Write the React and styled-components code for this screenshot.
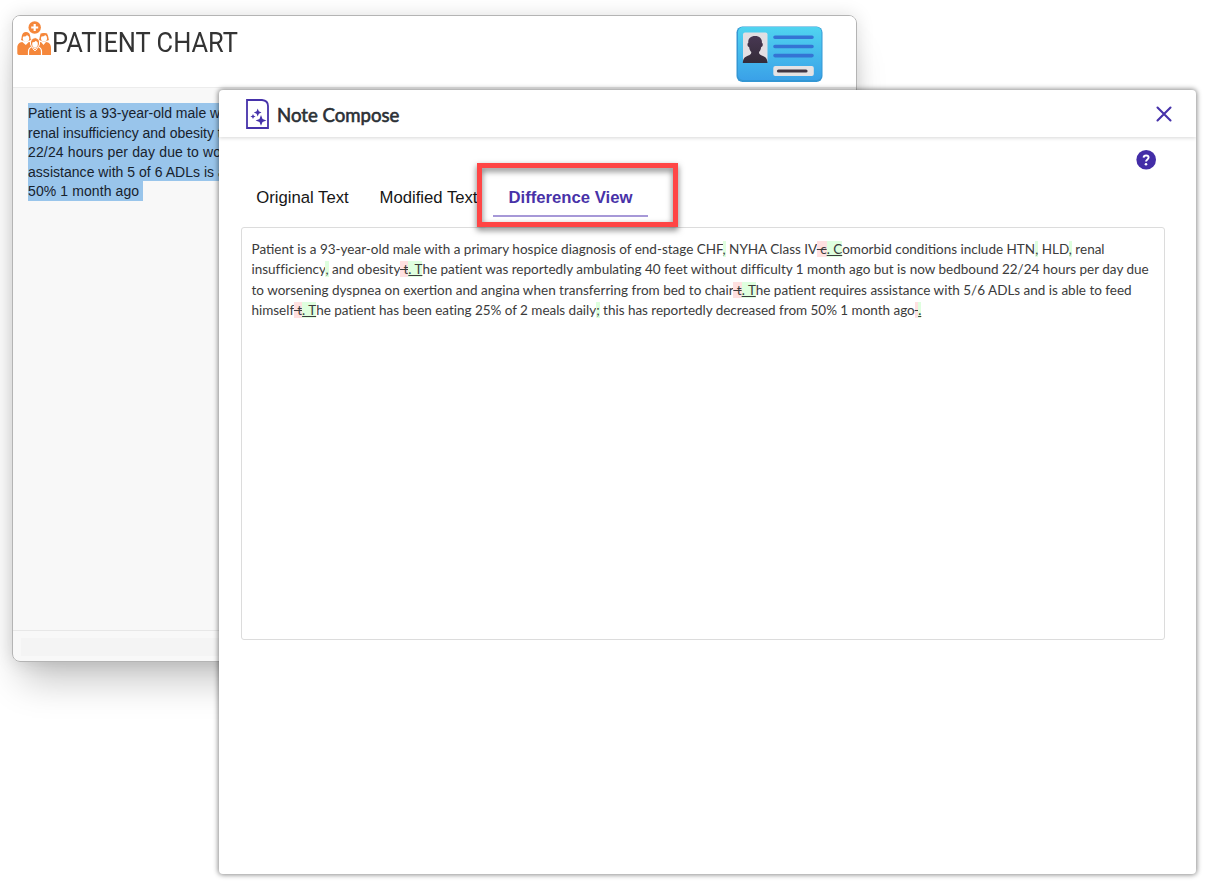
import React from "react";
import styled, { createGlobalStyle, css } from "styled-components";

const Global = createGlobalStyle`
  * { box-sizing: border-box; }
  html, body { margin: 0; background: #fff; }
`;

const Desktop = styled.div`
  position: relative;
  width: 1205px;
  height: 885px;
  overflow: hidden;
  background: #fff;
  font-family: "Liberation Sans", Arial, sans-serif;
`;

const ChartWindow = styled.section`
  position: absolute;
  left: 12px;
  top: 15px;
  width: 845px;
  height: 647px;
  display: flex;
  flex-direction: column;
  border: 1px solid #b4b4b4;
  border-radius: 8px;
  background: #f8f8f8;
  overflow: hidden;
`;

const ChartShadow = styled.div`
  position: absolute;
  left: 12px;
  top: 15px;
  width: 845px;
  height: 647px;
  border-radius: 8px;
  box-shadow: 0 28px 36px -10px rgba(0, 0, 0, 0.23), 0 0 18px rgba(0, 0, 0, 0.13);
`;

const ChartHeader = styled.header`
  height: 72px;
  flex: none;
  display: flex;
  justify-content: space-between;
  align-items: flex-start;
  padding: 5px 33px 0 4px;
  background: #fff;
  border-bottom: 1px solid #ececec;
`;

const Brand = styled.div`
  display: flex;
  align-items: flex-start;
`;

const ChartTitle = styled.h1`
  margin: 3.5px 0 0 0;
  font: 400 28px/36px Roboto, sans-serif;
  color: #333;
  white-space: nowrap;
  transform: scaleX(0.908);
  transform-origin: left;
`;

const CardIcon = styled.svg`
  margin-top: 5px;
`;

const ChartBody = styled.div`
  flex: 1;
  padding: 15.4px 15px;
`;

const SelectedLine = styled.div`
  width: fit-content;
  height: 19.5px;
  padding-right: ${(p) => p.$end || 0}px;
  background: #99c5eb;
  color: #17222d;
  font-size: 14px;
  line-height: 20.4px;
  letter-spacing: ${(p) => p.$spacing || 0}px;
  white-space: nowrap;
`;

const ChartFooter = styled.footer`
  height: 31px;
  flex: none;
  padding: 7px 8px 5px;
  border-top: 1px solid #e7e7e7;
`;

const FooterBar = styled.div`
  height: 18px;
  background: #f4f4f4;
`;

const ComposeWindow = styled.section`
  position: absolute;
  left: 219px;
  top: 90px;
  width: 977px;
  height: 784px;
  display: flex;
  flex-direction: column;
  border-radius: 4px;
  background: #fff;
  box-shadow: 0 0 5px 1px rgba(0, 0, 0, 0.45);
`;

const ComposeHeader = styled.header`
  height: 47px;
  flex: none;
  display: flex;
  align-items: center;
  justify-content: space-between;
  padding: 1px 24px 0 27px;
  box-shadow: 0 1px 4px rgba(0, 0, 0, 0.16);
  clip-path: inset(0 0 -8px 0);
`;

const ComposeTitle = styled.h2`
  display: flex;
  align-items: center;
  gap: 8px;
  margin: 0;
  font: 400 18.6px/24px Lato, sans-serif;
  -webkit-text-stroke: 0.6px #2b3035;
  color: #2b3035;
  white-space: nowrap;
`;

const TitleText = styled.span`
  padding-top: 2px;
`;

const HelpRow = styled.div`
  display: flex;
  justify-content: flex-end;
  padding: 13px 40px 0 0;
  height: 43px;
`;

const Tabs = styled.nav`
  display: flex;
  align-items: flex-start;
  height: 47px;
  padding-left: 22px;
`;

const Tab = styled.button`
  height: 37px;
  flex: none;
  margin: 0;
  padding: 0 0 2px;
  width: ${(p) => p.$width}px;
  border: 0;
  background: none;
  font: 16.7px/20px "Liberation Sans", Arial, sans-serif;
  color: #161616;
  white-space: nowrap;
  ${(p) => p.$active && css`
    font-weight: 700;
    color: #4832a8;
    border-bottom: 2px solid #a698d7;
    padding-bottom: 0;
  `}
`;

const Highlight = styled.div`
  position: absolute;
  left: 258px;
  top: 73px;
  width: 201px;
  height: 64px;
  border: 5px solid #ff4545;
  filter: drop-shadow(0 3px 3px rgba(0, 0, 0, 0.55));
`;

const DiffPanel = styled.div`
  width: 924px;
  height: 413px;
  margin-left: 21.5px;
  padding: 10.5px 10px;
  border: 1px solid #dcdcdc;
  border-radius: 3px;
  font: 400 13.5px/20.6px Lato, sans-serif;
  color: #3b3b3b;
`;

const DiffLine = styled.div`
  width: fit-content;
  white-space: pre;
  letter-spacing: ${(p) => p.$spacing || 0}px;
`;

const Removed = styled.del`
  background: #ffe0e0;
`;

const Added = styled.ins`
  background: #dfffdf;
`;

const Inserted = styled.span`
  background: #dfffdf;
`;

function PatientsIcon() {
  return (
    <svg width="35" height="35" viewBox="0 0 35 35" fill="#f5873b">
      <circle cx="17.7" cy="6.5" r="6.2" />
      <path d="M17.7 3v7M14.2 6.5h7" stroke="#fff" strokeWidth="2.2" />
      <path d="M.3 32.500v-5.500c0-4 2-5.500 5-6l3.500 3 3-3c2 .3 3 1 4 2v11H2.500q-2 0-2.200-1.500zM34 34v-7c0-4-2-5.500-5-6l-2.500 3-2.500-3c-2 .3-3 1-4 2v11z" />
      <path d="M4 19c1-2 0-8 5-8s4 6 5 8l-5 2zM22 19c1-2 0-7 5-7s4 5 5 7l-5 2z" />
      <ellipse cx="9" cy="17.300" rx="3.200" ry="3.800" fill="#fff" />
      <path d="M6 15.500q3 .5 4-1.500 1 1.300 2.200 1.500v-3H6z" />
      <ellipse cx="27" cy="17.300" rx="3" ry="3.500" fill="#fff" />
      <path d="M23.500 15.500q3 .3 5-1.500l1.700 1.500v-3h-6.700z" />
      <path d="M11.500 34.500v-4c0-3.500 2-4.500 4.500-5l2 2 2-2c2.500.5 4.500 1.500 4.500 5v4z" stroke="#fff" strokeWidth="1.200" />
      <ellipse cx="18" cy="22" rx="4.600" ry="5.200" stroke="#fff" strokeWidth="1" />
      <ellipse cx="18" cy="23" rx="2.800" ry="3.400" fill="#fff" />
      <path d="M14.800 21.300q2.800.3 4-1.500 1 1.300 2.700 1.500v-2l-3-2-3.500 2z" />
      <path d="M15.500 27.500l2.500 2.300 2.500-2.300" stroke="#fff" strokeWidth="1" fill="none" />
    </svg>
  );
}

function IdCard() {
  return (
    <CardIcon width="87" height="57" viewBox="0 0 87 57">
      <defs>
        <linearGradient id="card" x2="0" y2="1">
          <stop stopColor="#50d4f0" />
          <stop offset="1" stopColor="#3aa1e8" />
        </linearGradient>
        <linearGradient id="person" x2="0" y2="1">
          <stop stopColor="#483853" />
          <stop offset="1" stopColor="#342b38" />
        </linearGradient>
      </defs>
      <rect x=".5" y=".5" width="86" height="55.5" rx="6" fill="#3497d4" />
      <rect x="2" y="1" width="83.5" height="53" rx="5" fill="url(#card)" />
      <rect x="7" y="6.5" width="24.5" height="30.5" rx="2" fill="#e2dfe3" />
      <path d="M12.3 17c-.5-4 2-7 6.8-7s7.2 3 6.8 7c1.500 0 1 4-.7 4-.5 3-1.200 4-2.200 5 0 3 2 3 5 4.500 2.500 1.200 3.500 3.500 3.500 6.500H6.800c0-3 1-5.300 3.500-6.500 3-1.500 5-1.500 5-4.500-1-1-1.700-2-2.200-5-1.700 0-2.200-4-.8-4z" fill="url(#person)" />
      <path d="M39 11.300h37M39 20.500h37M39 29.600h37" stroke="#3474d4" strokeWidth="3.600" strokeLinecap="round" />
      <rect x="37.300" y="40" width="40.500" height="10" rx="2" fill="#e5e2e4" />
      <path d="M42.500 45h27.500" stroke="#413542" strokeWidth="3.200" strokeLinecap="round" />
    </CardIcon>
  );
}

function NoteIcon() {
  return (
    <svg width="23" height="30" viewBox="0 0 23 30" fill="#4632aa">
      <path d="M1 1h15q6 .5 6 6v22H1z" fill="none" stroke="#4632aa" strokeWidth="1.800" />
      <path d="M11.700 9.500l1.100 2.800 2.700 1.200-2.700 1.200-1.100 2.800-1.100-2.800-2.700-1.200 2.700-1.200zM7 15l.8 1.800 1.800.7-1.800.8L7 20l-.8-1.700-1.800-.8 1.800-.7zM15 16l1.500 3.900 3.900 1.500-3.900 1.500L15 26.800l-1.500-3.900-3.900-1.500 3.900-1.500z" />
    </svg>
  );
}

function CloseIcon() {
  return (
    <svg width="16" height="16" viewBox="0 0 16 16">
      <path d="M1.500 1.500l13 13M14.500 1.500l-13 13" stroke="#4632aa" strokeWidth="2.100" strokeLinecap="round" />
    </svg>
  );
}

function HelpIcon() {
  return (
    <svg width="20" height="20" viewBox="0 0 20 20">
      <circle cx="10.2" cy="9.800" r="9.800" fill="#432da7" />
      <path d="M7.600 7.600c.1-2.800 5-2.800 5 0 0 1.900-2.600 1.800-2.600 4" stroke="#fff" strokeWidth="1.900" fill="none" />
      <circle cx="10" cy="14.200" r="1.300" fill="#fff" />
    </svg>
  );
}

export default function App() {
  return (
    <Desktop>
      <Global />
      <ChartShadow />
      <ChartWindow>
        <ChartHeader>
          <Brand>
            <PatientsIcon />
            <ChartTitle>PATIENT CHART</ChartTitle>
          </Brand>
          <IdCard />
        </ChartHeader>
        <ChartBody>
          <SelectedLine>Patient is a 93-year-old male with</SelectedLine>
          <SelectedLine $spacing={-0.02}>renal insufficiency and obesity the</SelectedLine>
          <SelectedLine $spacing={0.14}>22/24 hours per day due to worse</SelectedLine>
          <SelectedLine $spacing={0.03}>assistance with 5 of 6 ADLs is able</SelectedLine>
          <SelectedLine $end={4} $spacing={0.1}>50% 1 month ago</SelectedLine>
        </ChartBody>
        <ChartFooter><FooterBar /></ChartFooter>
      </ChartWindow>

      <ComposeWindow>
        <ComposeHeader>
          <ComposeTitle><NoteIcon /><TitleText>Note Compose</TitleText></ComposeTitle>
          <CloseIcon />
        </ComposeHeader>
        <HelpRow><HelpIcon /></HelpRow>
        <Tabs>
          <Tab $width={123}>Original Text</Tab>
          <Tab $width={129}>Modified Text</Tab>
          <Tab $width={155} $active>Difference View</Tab>
        </Tabs>
        <DiffPanel>
          <DiffLine>Patient is a 93-year-old male with a primary hospice diagnosis of end-stage CHF<Inserted>,</Inserted> NYHA Class IV<Removed> c</Removed><Added>. C</Added>omorbid conditions include HTN<Inserted>,</Inserted> HLD<Inserted>,</Inserted> renal</DiffLine>
          <DiffLine $spacing={-0.01}>insufficiency<Inserted>,</Inserted> and obesity<Removed> t</Removed><Added>. T</Added>he patient was reportedly ambulating 40 feet without difficulty 1 month ago but is now bedbound 22/24 hours per day due</DiffLine>
          <DiffLine>to worsening dyspnea on exertion and angina when transferring from bed to chair<Removed> t</Removed><Added>. T</Added>he patient requires assistance with 5/6 ADLs and is able to feed</DiffLine>
          <DiffLine $spacing={-0.025}>himself<Removed> t</Removed><Added>. T</Added>he patient has been eating 25% of 2 meals daily<Inserted>;</Inserted> this has reportedly decreased from 50% 1 month ago<Removed> </Removed><Added>.</Added></DiffLine>
        </DiffPanel>
        <Highlight />
      </ComposeWindow>
    </Desktop>
  );
}
